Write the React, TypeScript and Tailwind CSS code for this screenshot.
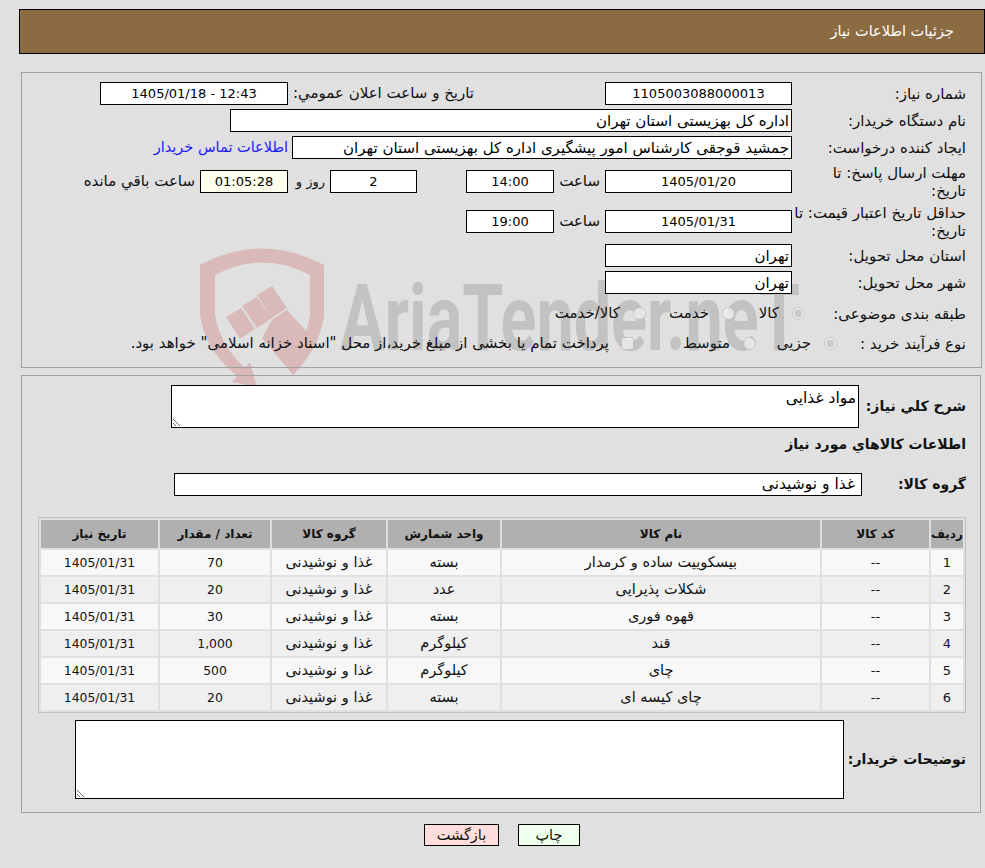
const items = [
  { id: 1, name: "بیسکوییت ساده و کرمدار", unit: "بسته", qty: "70" },
  { id: 2, name: "شکلات پذیرایی", unit: "عدد", qty: "20" },
  { id: 3, name: "قهوه فوری", unit: "بسته", qty: "30" },
  { id: 4, name: "قند", unit: "کیلوگرم", qty: "1,000" },
  { id: 5, name: "چای", unit: "کیلوگرم", qty: "500" },
  { id: 6, name: "چای کیسه ای", unit: "بسته", qty: "20" },
];

const inputClass = "h-[23px] border border-black px-[2px] text-black outline-none";

function Field({
  value,
  width,
  center,
  className = "bg-white",
}: {
  value: string;
  width: string;
  center?: boolean;
  className?: string;
}) {
  return (
    <input
      readOnly
      value={value}
      className={`${inputClass} ${width} ${center ? "text-center text-[13px]" : "text-right text-[15px]"} ${className}`}
    />
  );
}

function Label({ children }: { children: React.ReactNode }) {
  return (
    <div className="w-[189px] shrink-0 pr-[15px] text-[15px] leading-[18px] text-[#111]">
      {children}
    </div>
  );
}

function Radio({ checked, label, className = "" }: { checked?: boolean; label: string; className?: string }) {
  return (
    <label className={`flex items-center gap-[13px] text-[15px] text-[#111] ${className}`}>
      <input type="radio" disabled checked={!!checked} readOnly className="m-0 h-[13px] w-[13px]" />
      <span>{label}</span>
    </label>
  );
}

function Watermark() {
  return (
    <svg className="absolute left-0 top-0" width="985" height="868" viewBox="0 0 985 868">
      <path
        fill="#d9b9b9"
        d="M200 265 Q262 232 324 265 L324 317 Q318 350 293 375 L262 338 L272 320 L287 310 L293 353 Q308 335 310 315 L310 275 Q262 250 215 275 L215 315 Q220 345 245 368 L250 362 L257 387 L232 382 L237 376 Q205 350 200 315 Z"
      />
      <path fill="#d9b9b9" d="M272 320 L287 310 L310 335 L293 353 Z" />
      <path fill="#d9b9b9" d="M226 317 L241 308 L255 329 L240 339 Z" />
      <path fill="#d9b9b9" d="M242 306 L257 297 L272 318 L257 328 Z" />
      <path fill="#d9b9b9" d="M257 295 L272 286 L287 308 L272 318 Z" />
      <text
        x="340"
        y="350"
        direction="ltr"
        textAnchor="start"
        textLength="460"
        lengthAdjust="spacingAndGlyphs"
        fill="#c2c2c2"
        fontSize="92"
        fontWeight="700"
        fontFamily="Roboto, sans-serif"
      >
        AriaTender.neT
      </text>
    </svg>
  );
}

export default function App() {
  return (
    <div
      dir="rtl"
      className="relative h-[868px] w-[985px] overflow-hidden bg-[#e0e0e0] font-['DejaVu_Sans',sans-serif]"
    >
      <Watermark />
      <div className="relative pt-[9px]">
        <div className="ml-[19px] mr-0 flex h-[45px] items-center border border-black bg-[#8b6b42] pr-[30px] text-[14.5px] text-white">
          جزئیات اطلاعات نیاز
        </div>

        <div className="ml-[21px] mr-[3px] mt-[18px] h-[296px] border border-[#a0a0a0] pt-[9px]">
          <div className="flex h-[23px] items-center">
            <Label>شماره نیاز:</Label>
            <Field value="1105003088000013" width="w-[187px]" center />
            <div className="mr-[131px] w-[181px] whitespace-nowrap text-[15px] text-[#111]">تاریخ و ساعت اعلان عمومي:</div>
            <Field value="12:43 - 1405/01/18" width="w-[188px]" center className="mr-[5px] bg-white" />
          </div>
          <div className="mt-[4px] flex h-[23px] items-center">
            <Label>نام دستگاه خریدار:</Label>
            <Field value="اداره کل بهزیستی استان تهران" width="w-[562px]" />
          </div>
          <div className="mt-[4px] flex h-[23px] items-center">
            <Label>ایجاد کننده درخواست:</Label>
            <Field value="جمشید قوجقی کارشناس امور پیشگیری اداره کل بهزیستی استان تهران" width="w-[500px]" />
            <a className="mr-[4px] text-[14.5px] text-[#1a1aff]">اطلاعات تماس خریدار</a>
          </div>
          <div className="mt-[11px] flex h-[23px] items-center">
            <Label>
              مهلت ارسال پاسخ: تا
              <br />
              تاریخ:
            </Label>
            <Field value="1405/01/20" width="w-[187px]" center />
            <div className="mr-[5px] w-[46px] text-[15px] text-[#111]">ساعت</div>
            <Field value="14:00" width="w-[88px]" center />
            <Field value="2" width="w-[87px]" center className="mr-[49px] bg-white" />
            <div className="mr-[5px] w-[37px] text-[13px] text-[#111]">روز و</div>
            <Field value="01:05:28" width="w-[88px]" center className="bg-[#ffffee]" />
            <div className="mr-[5px] whitespace-nowrap text-[15px] text-[#111]">ساعت باقي مانده</div>
          </div>
          <div className="mt-[17px] flex h-[23px] items-center">
            <Label>حداقل تاریخ اعتبار قیمت: تا تاریخ:</Label>
            <Field value="1405/01/31" width="w-[187px]" center />
            <div className="mr-[5px] w-[46px] text-[15px] text-[#111]">ساعت</div>
            <Field value="19:00" width="w-[88px]" center />
          </div>
          <div className="mt-[11px] flex h-[23px] items-center">
            <Label>استان محل تحویل:</Label>
            <Field value="تهران" width="w-[187px]" />
          </div>
          <div className="mt-[4px] flex h-[23px] items-center">
            <Label>شهر محل تحویل:</Label>
            <Field value="تهران" width="w-[187px]" />
          </div>
          <div className="mt-[8px] flex h-[23px] items-center">
            <Label>طبقه بندی موضوعی:</Label>
            <Radio checked label="کالا" className="mr-[-13px] w-[70px]" />
            <Radio label="خدمت" className="w-[89px]" />
            <Radio label="کالا/خدمت" />
          </div>
          <div className="mt-[7px] flex h-[23px] items-center">
            <Label>نوع فرآیند خرید :</Label>
            <Radio checked label="جزیی" className="mr-[-45px] w-[81px]" />
            <Radio label="متوسط" className="w-[122px]" />
            <label className="flex items-center gap-[12px] whitespace-nowrap text-[15px] text-[#111]">
              <input type="checkbox" disabled className="m-0 h-[13px] w-[13px]" />
              <span>پرداخت تمام یا بخشی از مبلغ خرید،از محل "اسناد خزانه اسلامی" خواهد بود.</span>
            </label>
          </div>
        </div>

        <div className="ml-[21px] mr-[4px] mt-[7px] h-[438px] border border-[#a0a0a0] pt-[9px]">
          <div className="flex items-center">
            <div className="w-[121px] shrink-0 pr-[14px] text-[14px] font-bold text-[#111]">شرح کلي نیاز:</div>
            <textarea
              readOnly
              value="مواد غذایی"
              className="h-[43px] w-[688px] border border-black bg-white px-[2px] pt-[2px] text-[15.5px] leading-[20px] text-black outline-none"
            />
          </div>
          <div className="mt-[6px] h-[19px] pr-[14px] text-[14px] font-bold text-[#111]">اطلاعات کالاهاي مورد نیاز</div>
          <div className="mt-[20px] flex items-center">
            <div className="w-[118px] shrink-0 pr-[14px] text-[14px] font-bold text-[#111]">گروه کالا:</div>
            <input
              readOnly
              value="غذا و نوشیدنی"
              className="h-[23px] w-[688px] border border-black bg-white pr-[6px] text-right text-[15.5px] text-black outline-none"
            />
          </div>

          <table className="ml-[14px] mr-[14px] mt-[21px] w-[928px] table-fixed border-separate border-spacing-[2px] border border-[#c0c0c0] text-center text-[14.5px] text-[#111]">
            <thead>
              <tr className="h-[28px] bg-[#b0b0b0] text-[12px] font-bold">
                <th className="w-[32px] p-0">ردیف</th>
                <th className="w-[107px] p-0">کد کالا</th>
                <th className="w-[318px] p-0">نام کالا</th>
                <th className="w-[112px] p-0">واحد شمارش</th>
                <th className="w-[114px] p-0">گروه کالا</th>
                <th className="w-[110px] p-0">تعداد / مقدار</th>
                <th className="w-[117px] p-0">تاریخ نیاز</th>
              </tr>
            </thead>
            <tbody>
              {items.map((item) => (
                <tr key={item.id} className={`h-[25px] ${item.id % 2 === 1 ? "bg-[#f8f8f8]" : "bg-[#efefef]"}`}>
                  <td className="p-0 text-[13px]">{item.id}</td>
                  <td className="p-0 text-[13px]">--</td>
                  <td className="p-0">{item.name}</td>
                  <td className="p-0">{item.unit}</td>
                  <td className="p-0">غذا و نوشیدنی</td>
                  <td className="p-0 pt-[1px] text-[12.4px]">{item.qty}</td>
                  <td className="p-0 pt-[1px] text-[12.4px]">1405/01/31</td>
                </tr>
              ))}
            </tbody>
          </table>

          <div className="mt-[7px] flex items-center">
            <div className="w-[136px] shrink-0 pr-[14px] text-[14px] font-bold text-[#111]">توضیحات خریدار:</div>
            <textarea
              readOnly
              className="h-[79px] w-[769px] border border-black bg-white outline-none"
            />
          </div>
        </div>

        <div className="mt-[11px] flex justify-center gap-[19px] pl-[19px]">
          <button className="h-[22px] w-[62px] border border-black bg-[#eeffee] text-[14.5px] text-[#111]">چاپ</button>
          <button className="h-[22px] w-[75px] border border-black bg-[#ffdddd] text-[14.5px] text-[#111]">بازگشت</button>
        </div>
      </div>
    </div>
  );
}
